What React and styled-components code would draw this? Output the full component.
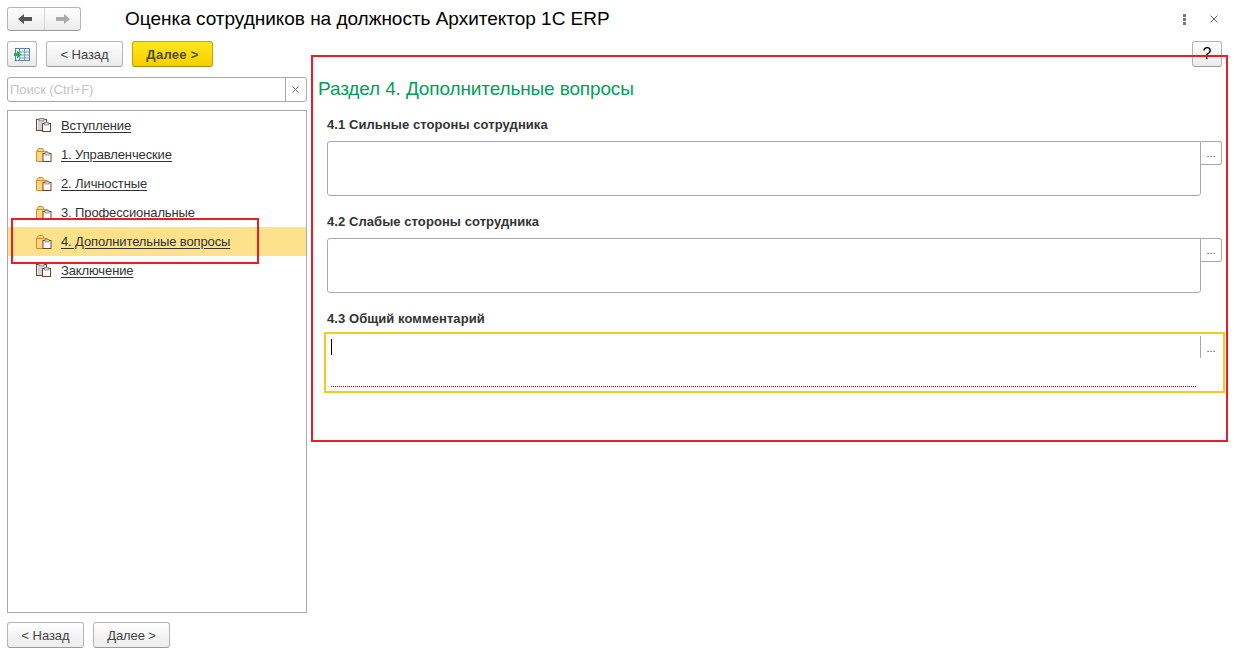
import styled, { createGlobalStyle } from "styled-components";

const GlobalStyle = createGlobalStyle`
  html, body {
    margin: 0;
    background: #fff;
    overflow: hidden;
  }
  body {
    font-family: "Liberation Sans", Arial, sans-serif;
    font-size: 13px;
    color: #333;
  }
`;

const Page = styled.div`
  position: relative;
  width: 1234px;
  height: 658px;
  display: flex;
  flex-direction: column;
`;

const Header = styled.header`
  height: 24px;
  padding: 7px 12px 0 7px;
  display: flex;
  align-items: center;
`;

const NavGroup = styled.div`
  width: 74px;
  height: 24px;
  box-sizing: border-box;
  display: flex;
  border: 1px solid #b5b5b5;
  border-bottom-color: #9c9c9c;
  border-radius: 3px;
  background: linear-gradient(#ffffff, #ececec);
`;

const NavButton = styled.div`
  flex: 1;
  display: flex;
  align-items: center;
  justify-content: center;
  & + & {
    border-left: 1px solid #d4d4d4;
  }
`;

const Title = styled.h1`
  margin: 0 0 0 44px;
  flex: 1;
  font-size: 19px;
  font-weight: normal;
  letter-spacing: -0.02px;
  color: #000;
`;

const WindowActions = styled.div`
  display: flex;
  align-items: center;
  gap: 24px;
  margin-right: 4px;
`;

const Main = styled.div`
  flex: 1;
  display: flex;
  padding: 10px 0 0 7px;
`;

const Sidebar = styled.aside`
  width: 300px;
  display: flex;
  flex-direction: column;
`;

const Toolbar = styled.div`
  display: flex;
  gap: 9px;
`;

const Button = styled.div`
  box-sizing: border-box;
  width: ${(p) => p.$width}px;
  height: 26px;
  display: flex;
  align-items: center;
  justify-content: center;
  border: 1px solid ${(p) => (p.$primary ? "#c2a500" : "#b5b5b5")};
  border-bottom-color: ${(p) => (p.$primary ? "#a88f00" : "#9c9c9c")};
  border-radius: 3px;
  background: ${(p) =>
    p.$primary
      ? "linear-gradient(#ffe81a, #f6cf00)"
      : "linear-gradient(#ffffff, #ececec)"};
  font-weight: ${(p) => (p.$primary ? "bold" : "normal")};
  letter-spacing: ${(p) => (p.$primary ? "0.3px" : "-0.1px")};
  color: ${(p) => (p.$primary ? "#4d4a24" : "#444")};
`;

const Search = styled.div`
  margin-top: 10px;
  height: 25px;
  box-sizing: border-box;
  display: flex;
  border: 1px solid #a9a9a9;
  border-radius: 3px;
`;

const SearchInput = styled.input`
  flex: 1;
  min-width: 0;
  border: 0;
  outline: 0;
  padding: 0 2px;
  background: transparent;
  font: 13px "Liberation Sans", Arial, sans-serif;
  letter-spacing: -0.05px;
  &::placeholder {
    color: #c4c4c4;
    opacity: 1;
  }
`;

const SearchClear = styled.div`
  width: 20px;
  box-sizing: content-box;
  display: flex;
  align-items: center;
  justify-content: center;
  border-left: 1px solid #a9a9a9;
  & > svg {
    margin-right: 2px;
  }
`;

const Tree = styled.ul`
  list-style: none;
  flex: none;
  height: 503px;
  box-sizing: border-box;
  margin: 8px 0 0;
  padding: 0;
  border: 1px solid #a9a9a9;
`;

const TreeRow = styled.li`
  height: 29px;
  display: flex;
  align-items: center;
  gap: 9px;
  padding-left: 28px;
  background: ${(p) => (p.$active ? "#fde28b" : "transparent")};
`;

const TreeLink = styled.a`
  color: #333;
  letter-spacing: -0.12px;
  text-decoration: underline;
  text-underline-offset: 2px;
`;

const Footer = styled(Toolbar)`
  margin-top: 9px;
`;

const Content = styled.section`
  flex: 1;
  margin-left: 11px;
  padding-right: 12px;
  display: flex;
  flex-direction: column;
`;

const HelpRow = styled.div`
  display: flex;
  justify-content: flex-end;
  height: 26px;
`;

const HelpButton = styled(Button)`
  color: #000;
  font-size: 16px;
`;

const Heading = styled.h2`
  margin: 11px 0 17px;
  font-size: 19px;
  line-height: 22px;
  font-weight: normal;
  letter-spacing: -0.13px;
  color: #00a05a;
`;

const Form = styled.div`
  padding-left: 9px;
  display: flex;
  flex-direction: column;
  gap: 18px;
`;

const FieldLabel = styled.label`
  display: block;
  line-height: 16px;
  margin-bottom: 8px;
  font-weight: bold;
  letter-spacing: 0.07px;
`;

const FieldBody = styled.div`
  display: flex;
  height: 55px;
  outline: ${(p) => (p.$focused ? "2px solid #f9c81e" : "none")};
  outline-offset: 1px;
`;

const TextBox = styled.div`
  width: 874px;
  box-sizing: border-box;
  border: 1px solid #a9a9a9;
  border-radius: 3px 0 3px 3px;
`;

const FocusedBox = styled.div`
  width: 865px;
  height: 47px;
  margin: 0 4px;
  padding-top: 4px;
  border-bottom: 1px dotted #b00000;
`;

const Caret = styled.div`
  width: 1px;
  height: 16px;
  background: #000;
`;

const PickButton = styled.div`
  width: 21px;
  height: 24px;
  box-sizing: border-box;
  display: flex;
  align-items: center;
  justify-content: center;
  border: 1px solid #a9a9a9;
  border-left: 0;
  border-radius: 0 3px 3px 0;
  font-size: 11px;
  color: #444;
`;

const FocusedPick = styled(PickButton)`
  height: 22px;
  margin-top: 1px;
  padding-top: 2px;
  border: 0;
  border-left: 1px solid #a9a9a9;
  border-radius: 0;
`;

const Annotation = styled.div`
  position: absolute;
  left: ${(p) => p.$x}px;
  top: ${(p) => p.$y}px;
  width: ${(p) => p.$w}px;
  height: ${(p) => p.$h}px;
  box-sizing: border-box;
  border: 2px solid #ed1c24;
  pointer-events: none;
`;

function ArrowLeft({ color }) {
  return (
    <svg width="15" height="12" viewBox="0 0 15 12">
      <path d="M0 6 6 1v3h8v4H6v3z" fill={color} />
    </svg>
  );
}

function ArrowRight({ color }) {
  return (
    <svg width="15" height="12" viewBox="0 0 15 12">
      <path d="M15 6 9 1v3H1v4h8v3z" fill={color} />
    </svg>
  );
}

function Kebab() {
  return (
    <svg width="3" height="11" viewBox="0 0 3 11" fill="#777">
      <rect width="3" height="3" />
      <rect y="4" width="3" height="3" />
      <rect y="8" width="3" height="3" />
    </svg>
  );
}

function CloseIcon({ size, color }) {
  return (
    <svg width={size} height={size} viewBox="0 0 8 8">
      <path d="M.5.5l7 7M7.5.5l-7 7" stroke={color} fill="none" strokeWidth="1" />
    </svg>
  );
}

function FormIcon() {
  return (
    <svg width="16" height="15" viewBox="0 0 16 15">
      <rect x="1.5" y="1.5" width="14" height="12" fill="#e8f1f8" stroke="#5b86a8" />
      <path d="M5.5 2v11M10.5 2v11M6 5h9M6 8h9M6 11h9" stroke="#7fa3bf" strokeWidth="1" />
      <path d="M0 6h3V3.5L7.5 7.5 3 11.500V9H0z" fill="#22b14c" />
    </svg>
  );
}

function Clipboard({ x, y }) {
  return (
    <g transform={`translate(${x} ${y})`}>
      <rect x=".5" y="1.500" width="8" height="8" fill="#fff" stroke="#7a3e28" />
      <rect x="2.500" y=".5" width="4" height="2.500" fill="#d4d4d4" stroke="#8a8a8a" strokeWidth=".8" />
    </g>
  );
}

function DocIcon() {
  return (
    <svg width="16" height="16" viewBox="0 0 16 16">
      <rect x=".5" y="1.500" width="10" height="11" fill="#f4f4f4" stroke="#7a3e28" />
      <rect x="3" y=".5" width="5" height="2.500" fill="#d9d9d9" stroke="#8a8a8a" />
      <path d="M2 5h4M2 7h4M2 9h4M2 11h4" stroke="#9db4c6" />
      <Clipboard x={6} y={4} />
    </svg>
  );
}

function FolderIcon() {
  return (
    <svg width="16" height="16" viewBox="0 0 16 16">
      <path d="M.5 14.500V4.500L2.500 1.500h4L8.500 4.500h3v10z" fill="#fcd67c" stroke="#c98d34" />
      <path d="M.5 4.500h8" stroke="#c98d34" />
      <Clipboard x={6.500} y={5} />
    </svg>
  );
}

const sections = [
  { label: "Вступление", icon: "doc" },
  { label: "1. Управленческие", icon: "folder" },
  { label: "2. Личностные", icon: "folder" },
  { label: "3. Профессиональные", icon: "folder" },
  { label: "4. Дополнительные вопросы", icon: "folder", active: true },
  { label: "Заключение", icon: "doc" },
];

const questions = ["4.1 Сильные стороны сотрудника", "4.2 Слабые стороны сотрудника"];

export default function App() {
  return (
    <Page>
      <GlobalStyle />
      <Header>
        <NavGroup>
          <NavButton>
            <ArrowLeft color="#555" />
          </NavButton>
          <NavButton>
            <ArrowRight color="#aaa" />
          </NavButton>
        </NavGroup>
        <Title>Оценка сотрудников на должность Архитектор 1С ERP</Title>
        <WindowActions>
          <Kebab />
          <CloseIcon size={8} color="#666" />
        </WindowActions>
      </Header>
      <Main>
        <Sidebar>
          <Toolbar>
            <Button $width={30}>
              <FormIcon />
            </Button>
            <Button $width={77}>&lt; Назад</Button>
            <Button $width={81} $primary>
              Далее &gt;
            </Button>
          </Toolbar>
          <Search>
            <SearchInput placeholder="Поиск (Ctrl+F)" />
            <SearchClear>
              <CloseIcon size={7} color="#555" />
            </SearchClear>
          </Search>
          <Tree>
            {sections.map((s) => (
              <TreeRow key={s.label} $active={s.active}>
                {s.icon === "doc" ? <DocIcon /> : <FolderIcon />}
                <TreeLink>{s.label}</TreeLink>
              </TreeRow>
            ))}
          </Tree>
          <Footer>
            <Button $width={77}>&lt; Назад</Button>
            <Button $width={77}>Далее &gt;</Button>
          </Footer>
        </Sidebar>
        <Content>
          <HelpRow>
            <HelpButton $width={30}>?</HelpButton>
          </HelpRow>
          <Heading>Раздел 4. Дополнительные вопросы</Heading>
          <Form>
            {questions.map((q) => (
              <div key={q}>
                <FieldLabel>{q}</FieldLabel>
                <FieldBody>
                  <TextBox />
                  <PickButton>...</PickButton>
                </FieldBody>
              </div>
            ))}
            <div>
              <FieldLabel>4.3 Общий комментарий</FieldLabel>
              <FieldBody $focused>
                <FocusedBox>
                  <Caret />
                </FocusedBox>
                <FocusedPick>...</FocusedPick>
              </FieldBody>
            </div>
          </Form>
        </Content>
      </Main>
      <Annotation $x={311} $y={55} $w={917} $h={387} />
      <Annotation $x={11} $y={218} $w={248} $h={46} />
    </Page>
  );
}
